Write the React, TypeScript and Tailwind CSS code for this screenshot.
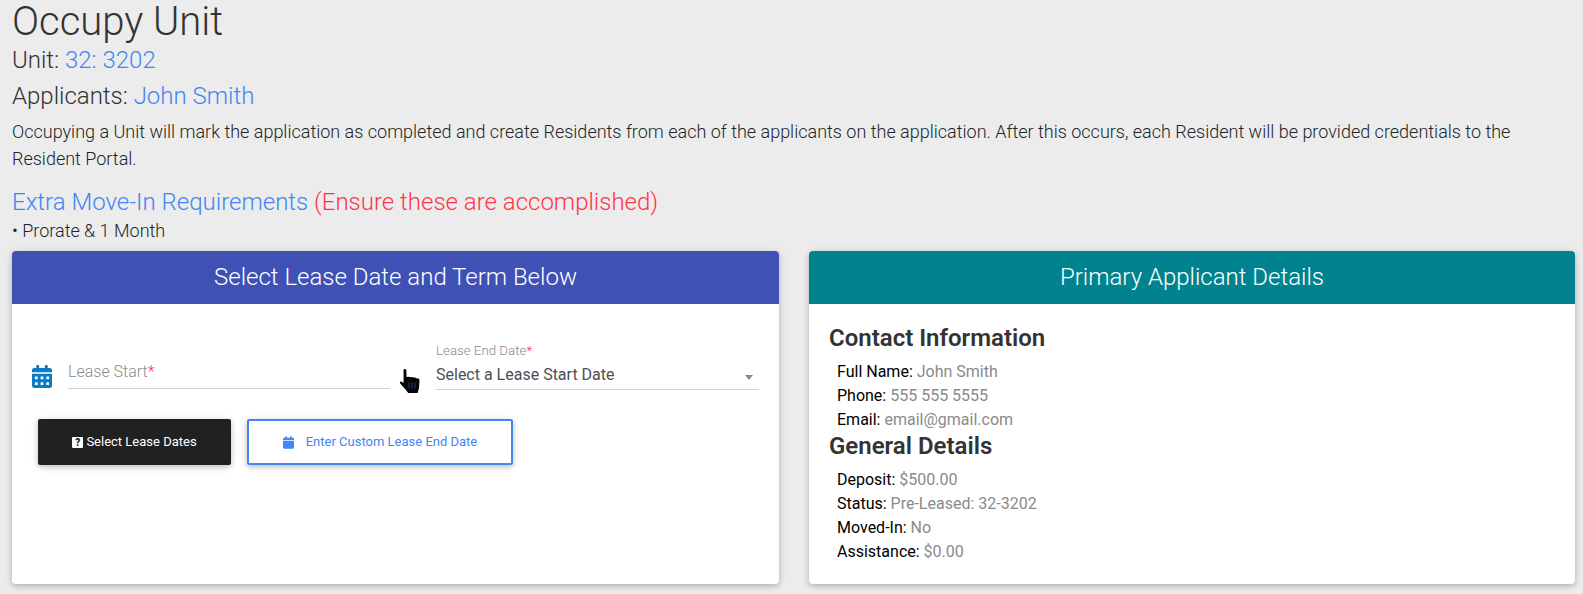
import React from "react";
import { FaCalendarAlt, FaCalendar } from "react-icons/fa";

const Row = ({ k, v }: { k: string; v: string }) => (
  <div className="h-6 leading-6 text-[16px] text-black">
    {k} <span className="text-[#8a8a8a]">{v}</span>
  </div>
);

const Hand = () => (
  <svg viewBox="0 0 23 24" className="w-[23px] h-[24px] -ml-[6px] -mb-[2px] shrink-0">
    <path
      d="M4.5 1.2Q4.6 0 5.8 0Q7.2 0 7.3 1.2L7.6 8L10 7.7L11.4 8.2L13 8L14.6 8.6L16.3 8.5L18 9.4L19.6 9.6Q20.5 10 20.5 12L20 19L18.6 24L9.2 24L7 21L1.2 14.6Q0.4 12.8 2 12.2L4.6 14Z"
      fill="#050505"
    />
    <path d="M10 13.5V19.5M13 13.5V19.5M16 13.5V19.5" stroke="#1f3d6b" strokeWidth="1.1" />
  </svg>
);

export default function App() {
  return (
    <div className="w-[1583px] h-[594px] overflow-hidden bg-[#ececec] pl-3 text-[#333] font-['Roboto',sans-serif] font-light">
      <h1 className="text-[40px] leading-[44px] h-[45px]">Occupy Unit</h1>
      <div className="text-[24px] leading-[29px] mt-[1px]">
        Unit: <span className="text-[#4285f4]">32: 3202</span>
      </div>
      <div className="text-[24px] leading-[29px] mt-[7px]">
        Applicants: <span className="text-[#4285f4]">John Smith</span>
      </div>
      <p className="text-[18px] leading-[27px] mt-[7px] w-[1530px] text-[#212529]">
        Occupying a Unit will mark the application as completed and create Residents from each of the applicants on the application. After this occurs, each Resident will be provided credentials to the Resident Portal.
      </p>
      <div className="text-[24px] leading-[29px] mt-[16px]">
        <span className="text-[#4285f4]">Extra Move-In Requirements</span>{" "}
        <span className="text-[#ff3547]">(Ensure these are accomplished)</span>
      </div>
      <div className="text-[18px] leading-6 mt-[2px] text-[#212529]">• Prorate &amp; 1 Month</div>
      <div className="flex gap-[30px] mt-[8px]">
        <div className="w-[767px] shrink-0 h-[333px] bg-white rounded-[4px] overflow-hidden shadow-[0_2px_5px_0_rgba(0,0,0,0.16),0_2px_10px_0_rgba(0,0,0,0.12)]">
          <div className="h-[53px] bg-[#3f51b5] text-white text-center text-[24px] leading-[53px]">Select Lease Date and Term Below</div>
          <div className="px-5">
            <div className="flex items-end mt-[39px]">
              <FaCalendarAlt className="text-[#0a7bc4] w-[20px] h-[23px] mb-[3px] shrink-0" />
              <div className="ml-[16px] w-[322px] h-[37px] border-b border-[#ced4da] text-[16px] text-[#8a8a8a] leading-[40px] mb-[2px]">
                Lease Start<span className="text-[#ff3547]">*</span>
              </div>
              <div className="w-[46px] flex justify-center">
                <Hand />
              </div>
              <div className="w-[323px] border-b border-[#ced4da] text-[#495057] font-normal mb-[1px]">
                <div className="text-[13.3px] leading-[16px] text-[#8a8a8a] font-light">Lease End Date<span className="text-[#ff3547]">*</span></div>
                <div className="flex items-center justify-between h-[30px] pt-[2px] text-[16px] leading-[24px] font-normal pr-[6px]">
                  <span>Select a Lease Start Date</span>
                  <span className="w-0 h-0 border-x-[4px] border-x-transparent border-t-[5px] border-t-[#888] mt-1" />
                </div>
              </div>
            </div>
            <div className="flex gap-[16px] mt-[28px] ml-[6px] font-normal">
              <button className="w-[193px] h-[46px] bg-[#212121] text-white text-[13px] rounded-[2px] flex items-center justify-center shadow-[0_2px_5px_0_rgba(0,0,0,0.16),0_2px_10px_0_rgba(0,0,0,0.12)]">
                <span className="w-[11px] h-[11px] bg-white rounded-[1px] text-[#212121] text-[10px] leading-[11px] font-black mr-[3px] text-center">?</span>
                Select Lease Dates
              </button>
              <button className="w-[266px] h-[46px] bg-white border-2 border-[#4285f4] text-[#4285f4] text-[13px] rounded-[2px] flex items-center justify-center shadow-[0_2px_5px_0_rgba(0,0,0,0.16),0_2px_10px_0_rgba(0,0,0,0.12)]">
                <FaCalendar className="w-[11px] h-[13px] mr-[12px]" />
                Enter Custom Lease End Date
              </button>
            </div>
          </div>
        </div>
        <div className="w-[766px] shrink-0 h-[333px] bg-white rounded-[4px] overflow-hidden shadow-[0_2px_5px_0_rgba(0,0,0,0.16),0_2px_10px_0_rgba(0,0,0,0.12)]">
          <div className="h-[53px] bg-[#00838f] text-white text-center text-[24px] leading-[53px]">Primary Applicant Details</div>
          <div className="px-5 pt-[20px] font-normal">
            <h4 className="text-[24px] leading-[29px] font-semibold text-[#333] mb-[7px]">Contact Information</h4>
            <div className="pl-2">
              <Row k="Full Name:" v="John Smith" />
              <Row k="Phone:" v="555 555 5555" />
              <Row k="Email:" v="email@gmail.com" />
            </div>
            <h4 className="text-[24px] leading-[29px] font-semibold text-[#333] mb-[7px]">General Details</h4>
            <div className="pl-2">
              <Row k="Deposit:" v="$500.00" />
              <Row k="Status:" v="Pre-Leased: 32-3202" />
              <Row k="Moved-In:" v="No" />
              <Row k="Assistance:" v="$0.00" />
            </div>
          </div>
        </div>
      </div>
    </div>
  );
}
